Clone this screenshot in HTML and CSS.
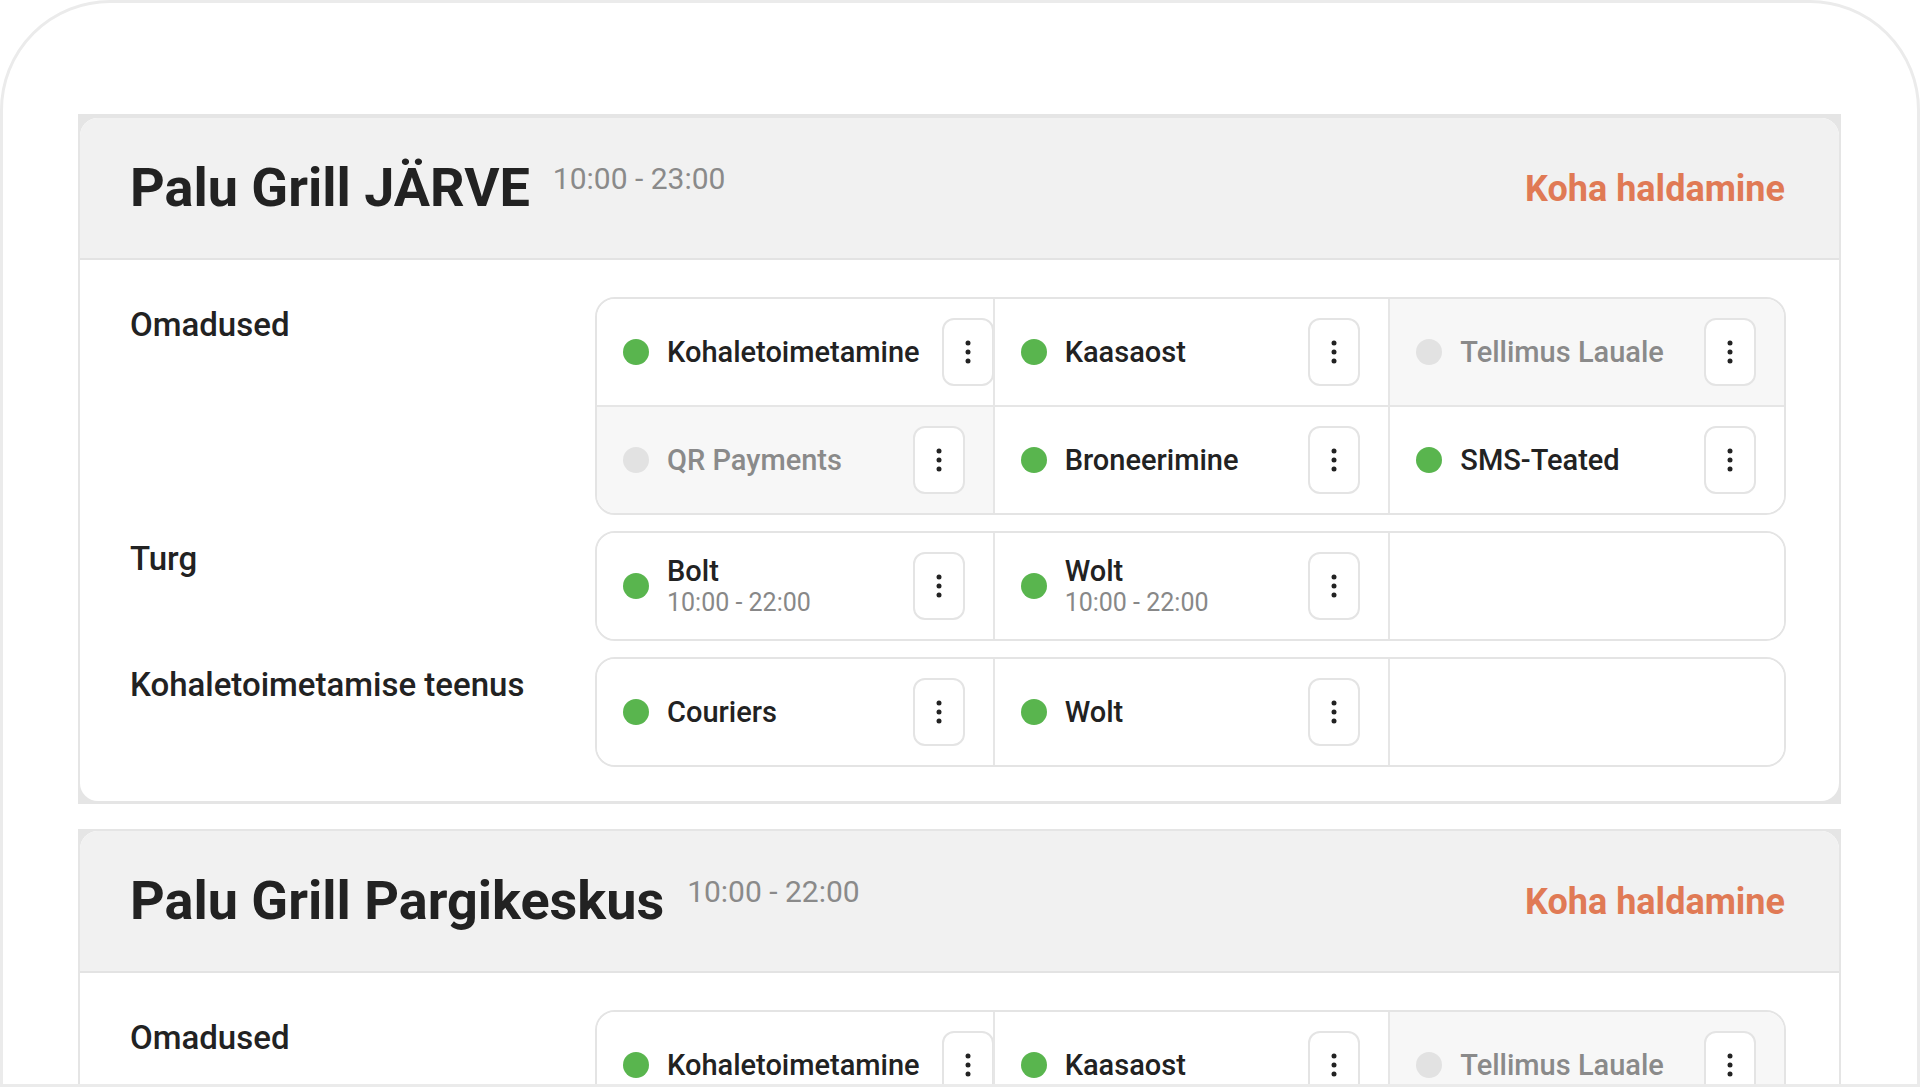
FILE: index.html
```html
<!DOCTYPE html>
<html lang="et">
<head>
    <meta charset="UTF-8">
    <title>Kohad</title>
    <meta name="viewport" content="width=device-width, initial-scale=1.0">
    <link rel="stylesheet" href="styles.css">
</head>
<body>
<div class="frame">

    <div class="venue">
        <div class="venue-inner">
            <div class="venue-head">
                <div class="venue-title">
                    <h2>Palu Grill JÄRVE</h2>
                    <span class="hours">10:00 - 23:00</span>
                </div>
                <a class="manage" href="#">Koha haldamine</a>
            </div>
            <div class="venue-body">
                <div class="label">Omadused</div>
                <div class="box">
                    <div class="cell"><span class="dot on"></span><span class="name">Kohaletoimetamine</span><button class="more"><svg width="6" height="24" viewBox="0 0 6 24"><circle cx="3" cy="3" r="2.5"/><circle cx="3" cy="12" r="2.5"/><circle cx="3" cy="21" r="2.5"/></svg></button></div>
                    <div class="cell"><span class="dot on"></span><span class="name">Kaasaost</span><button class="more"><svg width="6" height="24" viewBox="0 0 6 24"><circle cx="3" cy="3" r="2.5"/><circle cx="3" cy="12" r="2.5"/><circle cx="3" cy="21" r="2.5"/></svg></button></div>
                    <div class="cell off"><span class="dot"></span><span class="name">Tellimus Lauale</span><button class="more"><svg width="6" height="24" viewBox="0 0 6 24"><circle cx="3" cy="3" r="2.5"/><circle cx="3" cy="12" r="2.5"/><circle cx="3" cy="21" r="2.5"/></svg></button></div>
                    <div class="cell off"><span class="dot"></span><span class="name">QR Payments</span><button class="more"><svg width="6" height="24" viewBox="0 0 6 24"><circle cx="3" cy="3" r="2.5"/><circle cx="3" cy="12" r="2.5"/><circle cx="3" cy="21" r="2.5"/></svg></button></div>
                    <div class="cell"><span class="dot on"></span><span class="name">Broneerimine</span><button class="more"><svg width="6" height="24" viewBox="0 0 6 24"><circle cx="3" cy="3" r="2.5"/><circle cx="3" cy="12" r="2.5"/><circle cx="3" cy="21" r="2.5"/></svg></button></div>
                    <div class="cell"><span class="dot on"></span><span class="name">SMS-Teated</span><button class="more"><svg width="6" height="24" viewBox="0 0 6 24"><circle cx="3" cy="3" r="2.5"/><circle cx="3" cy="12" r="2.5"/><circle cx="3" cy="21" r="2.5"/></svg></button></div>
                </div>

                <div class="label">Turg</div>
                <div class="box">
                    <div class="cell"><span class="dot on"></span><span class="name">Bolt<small>10:00 - 22:00</small></span><button class="more"><svg width="6" height="24" viewBox="0 0 6 24"><circle cx="3" cy="3" r="2.5"/><circle cx="3" cy="12" r="2.5"/><circle cx="3" cy="21" r="2.5"/></svg></button></div>
                    <div class="cell"><span class="dot on"></span><span class="name">Wolt<small>10:00 - 22:00</small></span><button class="more"><svg width="6" height="24" viewBox="0 0 6 24"><circle cx="3" cy="3" r="2.5"/><circle cx="3" cy="12" r="2.5"/><circle cx="3" cy="21" r="2.5"/></svg></button></div>
                    <div class="cell"></div>
                </div>

                <div class="label">Kohaletoimetamise teenus</div>
                <div class="box">
                    <div class="cell"><span class="dot on"></span><span class="name">Couriers</span><button class="more"><svg width="6" height="24" viewBox="0 0 6 24"><circle cx="3" cy="3" r="2.5"/><circle cx="3" cy="12" r="2.5"/><circle cx="3" cy="21" r="2.5"/></svg></button></div>
                    <div class="cell"><span class="dot on"></span><span class="name">Wolt</span><button class="more"><svg width="6" height="24" viewBox="0 0 6 24"><circle cx="3" cy="3" r="2.5"/><circle cx="3" cy="12" r="2.5"/><circle cx="3" cy="21" r="2.5"/></svg></button></div>
                    <div class="cell"></div>
                </div>
            </div>
        </div>
    </div>

    <div class="venue">
        <div class="venue-inner">
            <div class="venue-head">
                <div class="venue-title">
                    <h2>Palu Grill Pargikeskus</h2>
                    <span class="hours">10:00 - 22:00</span>
                </div>
                <a class="manage" href="#">Koha haldamine</a>
            </div>
            <div class="venue-body">
                <div class="label">Omadused</div>
                <div class="box">
                    <div class="cell"><span class="dot on"></span><span class="name">Kohaletoimetamine</span><button class="more"><svg width="6" height="24" viewBox="0 0 6 24"><circle cx="3" cy="3" r="2.5"/><circle cx="3" cy="12" r="2.5"/><circle cx="3" cy="21" r="2.5"/></svg></button></div>
                    <div class="cell"><span class="dot on"></span><span class="name">Kaasaost</span><button class="more"><svg width="6" height="24" viewBox="0 0 6 24"><circle cx="3" cy="3" r="2.5"/><circle cx="3" cy="12" r="2.5"/><circle cx="3" cy="21" r="2.5"/></svg></button></div>
                    <div class="cell off"><span class="dot"></span><span class="name">Tellimus Lauale</span><button class="more"><svg width="6" height="24" viewBox="0 0 6 24"><circle cx="3" cy="3" r="2.5"/><circle cx="3" cy="12" r="2.5"/><circle cx="3" cy="21" r="2.5"/></svg></button></div>
                    <div class="cell off"><span class="dot"></span><span class="name">QR Payments</span><button class="more"><svg width="6" height="24" viewBox="0 0 6 24"><circle cx="3" cy="3" r="2.5"/><circle cx="3" cy="12" r="2.5"/><circle cx="3" cy="21" r="2.5"/></svg></button></div>
                    <div class="cell"><span class="dot on"></span><span class="name">Broneerimine</span><button class="more"><svg width="6" height="24" viewBox="0 0 6 24"><circle cx="3" cy="3" r="2.5"/><circle cx="3" cy="12" r="2.5"/><circle cx="3" cy="21" r="2.5"/></svg></button></div>
                    <div class="cell"><span class="dot on"></span><span class="name">SMS-Teated</span><button class="more"><svg width="6" height="24" viewBox="0 0 6 24"><circle cx="3" cy="3" r="2.5"/><circle cx="3" cy="12" r="2.5"/><circle cx="3" cy="21" r="2.5"/></svg></button></div>
                </div>
            </div>
        </div>
    </div>

</div>
</body>
</html>
```

FILE: styles.css
```css
body {
    margin: 0;
    font-family: Roboto, "Liberation Sans", Arial, sans-serif;
    color: #222;
    background: #fff;
}
.frame {
    width: 1920px;
    height: 1087px;
    box-sizing: border-box;
    border: 3px solid #ebebeb;
    border-radius: 110px 110px 0 0;
    padding: 111px 76px 0 75px;
    overflow: hidden;
}

/* venue card: grey square backing, rounded white card on top */
.venue {
    background: #e5e5e5;
    padding: 2px 2px 3px 2px;
    margin-bottom: 25px;
}
.venue:first-child {
    padding-top: 4px;
}
.venue-inner {
    background: #fff;
    border-radius: 18px;
    overflow: hidden;
}
.venue-head {
    display: flex;
    align-items: center;
    justify-content: space-between;
    height: 140px;
    padding: 0 54px 0 50px;
    background: #f1f1f1;
    border-bottom: 2px solid #e3e3e3;
}
.venue-title {
    display: flex;
    align-items: flex-start;
    gap: 23px;
}
.venue-title h2 {
    margin: 0;
    font-size: 54px;
    line-height: 1;
    font-weight: 700;
    color: #222;
}
.hours {
    margin-top: 3px;
    font-size: 30px;
    line-height: 1;
    color: #8a8a8a;
}
.manage {
    margin-top: 2px;
    font-size: 36px;
    line-height: 1;
    font-weight: 700;
    color: #e07a55;
    text-decoration: none;
}

.venue-body {
    display: grid;
    grid-template-columns: 465px 1fr;
    row-gap: 16px;
    padding: 37px 53px 34px 50px;
}
.label {
    padding-top: 9px;
    font-size: 33px;
    line-height: 38px;
    font-weight: 500;
}

/* feature grid, three per row */
.box {
    display: grid;
    grid-template-columns: repeat(3, minmax(0, 1fr));
    border: 2px solid #e4e4e4;
    border-radius: 20px;
    overflow: hidden;
}
.cell {
    display: flex;
    align-items: center;
    height: 106px;
    padding: 0 28px 0 26px;
    overflow: hidden;
    background: #fff;
}
.cell:not(:nth-child(3n+1)) {
    border-left: 2px solid #e6e6e6;
}
.cell:nth-child(n+4) {
    border-top: 2px solid #e6e6e6;
}
.cell.off {
    background: #f7f7f7;
    color: #8a8a8a;
}
.dot {
    flex-shrink: 0;
    width: 26px;
    height: 26px;
    border-radius: 50%;
    background: #e2e2e2;
    margin-right: 18px;
}
.dot.on {
    background: #59b54e;
}
.name {
    flex-shrink: 0;
    margin-right: 22px;
    font-size: 29px;
    line-height: 34px;
    font-weight: 500;
    white-space: nowrap;
}
.name small {
    display: block;
    font-size: 25px;
    line-height: 30px;
    font-weight: 400;
    color: #888;
}
.more {
    flex-shrink: 0;
    display: flex;
    align-items: center;
    justify-content: center;
    width: 52px;
    height: 68px;
    margin-left: auto;
    padding: 0;
    background: #fff;
    border: 2px solid #e4e4e4;
    border-radius: 12px;
    cursor: pointer;
}
.more svg {
    fill: #222;
}
```
